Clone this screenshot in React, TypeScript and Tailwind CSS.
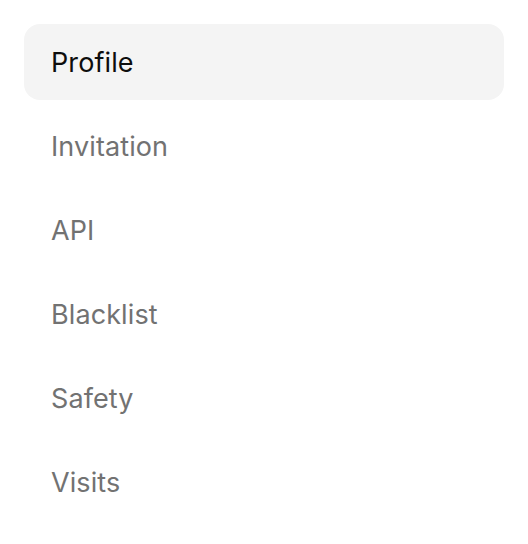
import React from "react";

const items = ["Profile", "Invitation", "API", "Blacklist", "Safety", "Visits"];

export default function App() {
  return (
    <div className="w-[528px] h-[544px] bg-white" style={{ fontFamily: "Inter, 'Noto Sans', sans-serif" }}>
      <nav className="flex flex-col gap-2 pt-6 px-6">
        {items.map((it, i) => (
          <div
            key={it}
            className={
              "h-[76px] flex items-center pt-[2px] px-[27px] rounded-2xl text-[27px] tracking-[0.1px] " +
              (i === 0 ? "bg-[#f4f4f4] text-[#0d0d0d]" : "text-[#727272]")
            }
          >
            {it}
          </div>
        ))}
      </nav>
    </div>
  );
}
